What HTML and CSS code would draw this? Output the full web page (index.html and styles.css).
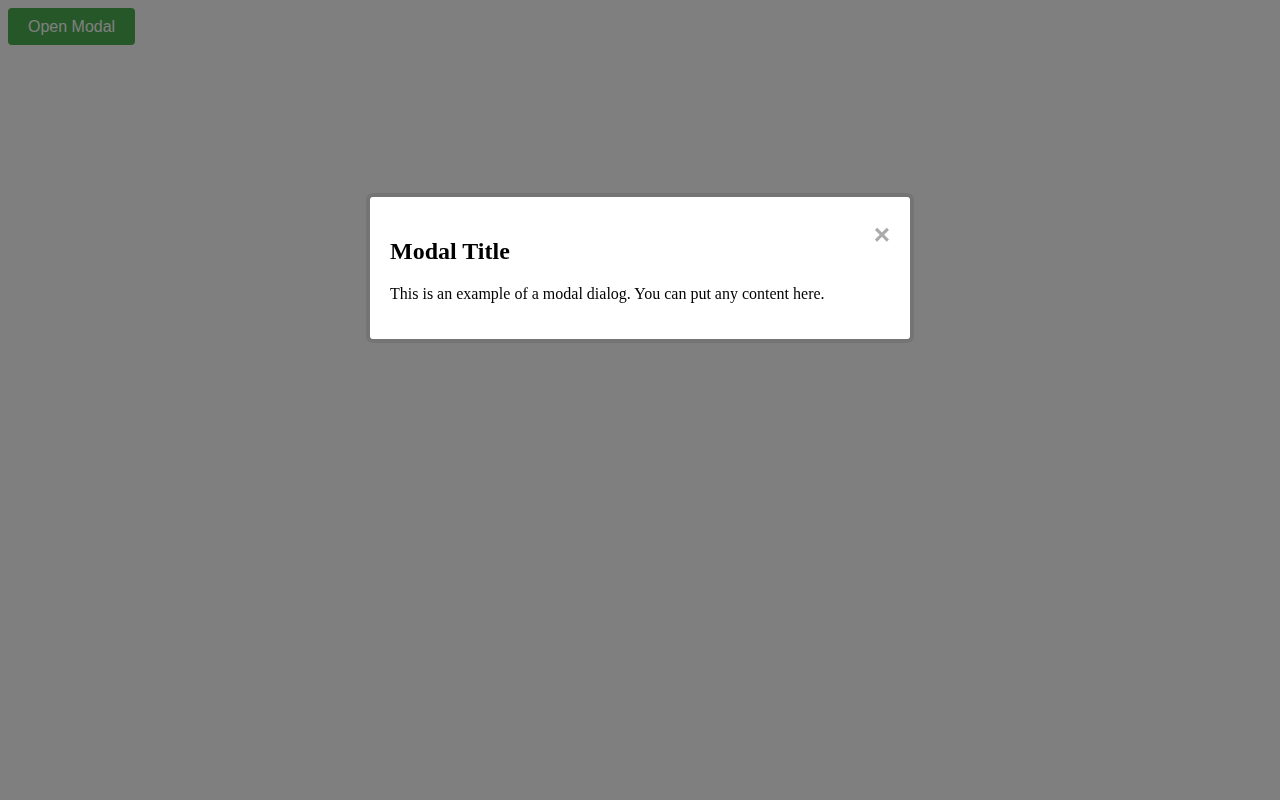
FILE: index.html
```html
<!DOCTYPE html>
<html lang="en">
<head>
<meta charset="utf-8">
<title>Modal</title>
<link rel="stylesheet" href="styles.css">
</head>
<body>
  <button class="open-btn" type="button">Open Modal</button>

  <div class="modal">
    <div class="modal-content">
      <span class="close">&times;</span>
      <h2>Modal Title</h2>
      <p>This is an example of a modal dialog. You can put any content here.</p>
    </div>
  </div>
</body>
</html>
```

FILE: styles.css
```css
body {
  margin: 8px;
  font-family: "Liberation Serif", "Times New Roman", serif;
}

.open-btn {
  display: block;
  background-color: #4caf50;
  color: #fff;
  border: none;
  border-radius: 4px;
  padding: 10px 20px;
  font-family: "Liberation Sans", Arial, sans-serif;
  font-size: 16px;
  line-height: 17px;
  cursor: pointer;
}

/* dimmed backdrop covering the page */
.modal {
  position: fixed;
  inset: 0;
  background-color: rgba(0, 0, 0, 0.5);
  padding-top: 197px;
}

.modal-content {
  background-color: #fff;
  width: 500px;
  margin: 0 auto;
  padding: 20px;
  border-radius: 3px;
  box-shadow: 0 0 0 4px rgba(0, 0, 0, 0.09);
}

.modal-content h2 {
  font-size: 24px;
  margin: 20px 0;
  line-height: 28px;
}

.modal-content p {
  font-size: 16px;
  margin: 16px 0;
  line-height: 18px;
}

.close {
  float: right;
  color: #aaa;
  font-family: "Liberation Sans", Arial, sans-serif;
  font-size: 28px;
  font-weight: bold;
  line-height: 36px;
  cursor: pointer;
}
```
